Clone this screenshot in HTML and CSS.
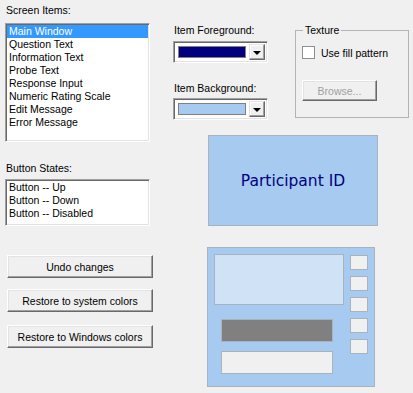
FILE: index.html
```html
<!DOCTYPE html>
<html lang="en">
<head>
  <meta charset="UTF-8">
  <title>Screen Colors</title>
  <link rel="stylesheet" href="styles.css">
</head>
<body>
  <div class="page">
    <div class="left-col">
      <div class="label">Screen Items:</div>
      <div class="listbox items-list">
        <div class="list-item selected">Main Window</div>
        <div class="list-item">Question Text</div>
        <div class="list-item">Information Text</div>
        <div class="list-item">Probe Text</div>
        <div class="list-item">Response Input</div>
        <div class="list-item">Numeric Rating Scale</div>
        <div class="list-item">Edit Message</div>
        <div class="list-item">Error Message</div>
      </div>

      <div class="label states-label">Button States:</div>
      <div class="listbox states-list">
        <div class="list-item">Button -- Up</div>
        <div class="list-item">Button -- Down</div>
        <div class="list-item">Button -- Disabled</div>
      </div>

      <button class="win-btn undo-btn">Undo changes</button>
      <button class="win-btn system-btn">Restore to system colors</button>
      <button class="win-btn windows-btn">Restore to Windows colors</button>
    </div>

    <div class="right-col">
      <div class="top-row">
        <div class="combo-col">
          <div class="label">Item Foreground:</div>
          <div class="combo">
            <div class="swatch swatch-fg"></div>
            <div class="drop-btn"><span class="arrow"></span></div>
          </div>
          <div class="label bg-label">Item Background:</div>
          <div class="combo">
            <div class="swatch swatch-bg"></div>
            <div class="drop-btn"><span class="arrow"></span></div>
          </div>
        </div>

        <fieldset class="groupbox">
          <legend>Texture</legend>
          <label class="check-row">
            <span class="checkbox"></span>
            <span>Use fill pattern</span>
          </label>
          <button class="win-btn browse-btn" disabled>Browse...</button>
        </fieldset>
      </div>

      <div class="sample-box">Participant ID</div>

      <div class="preview">
        <div class="preview-main">
          <div class="preview-panel"></div>
          <div class="preview-bar dark"></div>
          <div class="preview-bar light"></div>
        </div>
        <div class="preview-side">
          <div class="preview-square"></div>
          <div class="preview-square"></div>
          <div class="preview-square"></div>
          <div class="preview-square"></div>
          <div class="preview-square"></div>
        </div>
      </div>
    </div>
  </div>
</body>
</html>
```

FILE: styles.css
```css
body {
  margin: 0;
  background-color: #f0f0f0;
  color: #000000;
  font-family: 'Liberation Sans', Arial, sans-serif;
  font-size: 10.5px;
}

.page {
  display: flex;
  align-items: flex-start;
  padding: 4px 0 0 5px;
}

.label {
  height: 13px;
  line-height: 13px;
  padding-left: 1px;
  margin-bottom: 6px;
}

/* list boxes */
.listbox {
  box-sizing: border-box;
  width: 145px;
  background-color: #ffffff;
  border-style: solid;
  border-width: 1px;
  border-color: #a0a0a0 #ffffff #ffffff #a0a0a0;
  box-shadow: inset 1px 1px 0 #696969, inset -1px -1px 0 #e3e3e3;
  padding: 1px;
}

.items-list {
  height: 119px;
}

.states-label {
  margin-top: 20px;
  margin-bottom: 4px;
}

.states-list {
  height: 47px;
}

.list-item {
  height: 13px;
  line-height: 13px;
  padding-left: 2px;
  white-space: nowrap;
}

.list-item.selected {
  background-color: #3399ff;
  color: #ffffff;
}

/* buttons */
.win-btn {
  display: block;
  box-sizing: border-box;
  background-color: #f0f0f0;
  font-family: inherit;
  font-size: 10.5px;
  color: #000000;
  border-style: solid;
  border-width: 1px;
  border-color: #ffffff #696969 #696969 #ffffff;
  box-shadow: inset -1px -1px 0 #a0a0a0, inset 1px 1px 0 #e3e3e3;
  padding: 0;
}

.undo-btn,
.system-btn,
.windows-btn {
  width: 146px;
  height: 23px;
  margin-left: 2px;
}

.undo-btn {
  margin-top: 29px;
}

.system-btn {
  margin-top: 11px;
}

.windows-btn {
  margin-top: 13px;
}

/* right side */
.right-col {
  margin-left: 20px;
  margin-top: 20px;
}

.top-row {
  display: flex;
  align-items: flex-start;
}

.combo-col {
  width: 95px;
}

.combo-col .label {
  margin-bottom: 4px;
}

.combo-col .bg-label {
  margin-top: 19px;
  margin-bottom: 3px;
}

.combo {
  box-sizing: border-box;
  display: flex;
  height: 22px;
  background-color: #ffffff;
  border-style: solid;
  border-width: 1px;
  border-color: #a0a0a0 #ffffff #ffffff #a0a0a0;
  box-shadow: inset 1px 1px 0 #696969, inset -1px -1px 0 #e3e3e3;
  padding: 2px;
}

.swatch {
  flex: 1;
  margin: 2px 3px 2px 2px;
  border: 1px solid #808080;
}

.swatch-fg {
  background-color: #000080;
}

.swatch-bg {
  background-color: #a6caf0;
}

.drop-btn {
  box-sizing: border-box;
  width: 16px;
  background-color: #f0f0f0;
  border-style: solid;
  border-width: 1px;
  border-color: #e3e3e3 #696969 #696969 #e3e3e3;
  box-shadow: inset -1px -1px 0 #a0a0a0, inset 1px 1px 0 #ffffff;
  display: flex;
  align-items: center;
  justify-content: center;
}

.arrow {
  width: 0;
  height: 0;
  border-left: 4px solid transparent;
  border-right: 4px solid transparent;
  border-top: 4px solid #000000;
  margin-top: 1px;
}

.groupbox {
  box-sizing: border-box;
  width: 114px;
  margin: 0 0 0 27px;
  padding: 0 6px 16px 6px;
  border: 1px solid #b4b4b4;
}

.groupbox legend {
  margin-left: 1px;
  padding: 0 2px;
  line-height: 13px;
}

.check-row {
  display: flex;
  align-items: center;
  gap: 6px;
  margin-top: 9px;
  height: 13px;
}

.checkbox {
  box-sizing: border-box;
  width: 13px;
  height: 13px;
  background-color: #ffffff;
  border: 1px solid #8e8f8f;
}

.browse-btn {
  width: 75px;
  height: 21px;
  margin-top: 21px;
  color: #a0a0a0;
}

.sample-box {
  box-sizing: border-box;
  width: 170px;
  height: 91px;
  margin: 15px 0 0 35px;
  background-color: #a6caf0;
  border: 1px solid #a9b3bd;
  color: #000080;
  font-family: 'DejaVu Sans', Verdana, sans-serif;
  font-size: 15.5px;
  display: flex;
  align-items: center;
  justify-content: center;
}

/* window preview */
.preview {
  box-sizing: border-box;
  display: flex;
  gap: 6px;
  width: 168px;
  height: 140px;
  margin: 21px 0 0 34px;
  padding: 6px;
  background-color: #a6caf0;
  border: 1px solid #a9b3bd;
}

.preview-main {
  width: 132px;
}

.preview-panel {
  box-sizing: border-box;
  height: 51px;
  background-color: #d0e2f6;
  border: 1px solid #a9b3bd;
}

.preview-bar {
  box-sizing: border-box;
  width: 112px;
  height: 23px;
  margin-left: 7px;
  border: 1px solid #a9b3bd;
}

.preview-bar.dark {
  margin-top: 14px;
  background-color: #808080;
}

.preview-bar.light {
  margin-top: 9px;
  background-color: #f0f0f0;
}

.preview-side {
  display: flex;
  flex-direction: column;
  gap: 6px;
  padding-top: 1px;
}

.preview-square {
  box-sizing: border-box;
  width: 18px;
  height: 15px;
  background-color: #f0f0f0;
  border: 1px solid #a9b3bd;
}
```
